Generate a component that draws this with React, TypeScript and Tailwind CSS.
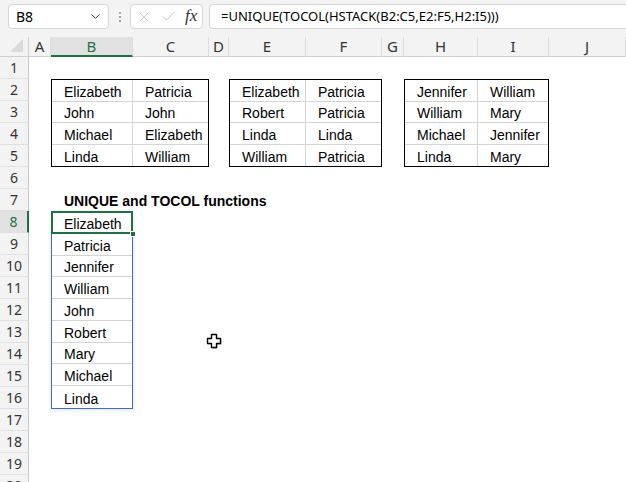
import { ChevronDown, X, Check } from 'lucide-react';

const cols = ['A', 'B', 'C', 'D', 'E', 'F', 'G', 'H', 'I', 'J'];

const Table = ({ rows, className }: { rows: string[][]; className: string }) => (
    <div className={`${className} row-start-3 row-span-4 border border-black grid grid-cols-subgrid grid-rows-4 bg-white z-10`}>
        {rows.map((r, i) =>
            r.map((name, j) => (
                <div
                    key={`${i}-${j}`}
                    className={`flex items-end leading-none pb-[2px] pl-[12px] ${i < 3 ? 'border-b border-[#d4d4d4]' : ''} ${j === 0 ? 'border-r border-[#d4d4d4]' : ''}`}
                >
                    {name}
                </div>
            ))
        )}
    </div>
);

const spill = ['Elizabeth', 'Patricia', 'Jennifer', 'William', 'John', 'Robert', 'Mary', 'Michael', 'Linda'];

const App = () => {
    return (
        <div className="w-[626px] h-[482px] overflow-hidden bg-white relative text-black" style={{ fontFamily: '"Liberation Sans", Arial, sans-serif' }}>
            {/* formula bar */}
            <div className="h-[37px] bg-[#f3f3f3] flex items-start pt-[4px] pl-[8px] gap-0" style={{ fontFamily: '"Noto Sans", sans-serif' }}>
                <div className="w-[101px] h-[25px] bg-white border border-[#d6d6d6] rounded-[4px] flex items-center pl-[7px] pr-[5px] text-[14px]">
                    <span className="flex-1">B8</span>
                    <ChevronDown size={15} strokeWidth={1.6} className="text-[#444]" />
                </div>
                <div className="w-[21px] h-[25px] flex flex-col items-center justify-center gap-[2px]">
                    <span className="w-[2px] h-[2px] bg-[#8a8a8a] rounded-full" />
                    <span className="w-[2px] h-[2px] bg-[#8a8a8a] rounded-full" />
                    <span className="w-[2px] h-[2px] bg-[#8a8a8a] rounded-full" />
                </div>
                <div className="w-[73px] h-[25px] bg-white border border-[#d6d6d6] rounded-[4px] flex items-center pl-[5px] gap-[8px]">
                    <X size={16} strokeWidth={1.1} className="text-[#b5b5b5]" />
                    <Check size={17} strokeWidth={1.1} className="text-[#b5b5b5]" />
                    <span className="text-[17px] italic text-[#333] leading-none -mt-[2px]" style={{ fontFamily: '"Liberation Serif", serif' }}>fx</span>
                </div>
                <div className="ml-[6px] flex-1 h-[25px] bg-white border border-[#d6d6d6] border-r-0 rounded-l-[4px] flex items-center pl-[11px] text-[13px]">
                    =UNIQUE(TOCOL(HSTACK(B2:C5,E2:F5,H2:I5)))
                </div>
            </div>

            {/* sheet */}
            <div className="grid grid-cols-[29px_22px_82px_76px_20px_77px_76px_22px_74px_71px_1fr] grid-rows-[20px_repeat(20,22px)] text-[14px]">
                {/* corner */}
                <div className="bg-[#f3f3f3] border-r border-b border-[#d0d0d0] flex items-end justify-end pr-[4px] pb-[3px]">
                    <svg width="14" height="14" viewBox="0 0 14 14">
                        <polygon points="13,0 13,13 0,13" fill="#dadada" />
                    </svg>
                </div>
                {cols.map((c) => (
                    <div
                        key={c}
                        className={`flex items-center justify-center text-[15px] border-r border-[#dcdcdc] ${
                            c === 'B'
                                ? 'bg-[#e1e1e1] text-[#1e7145] border-b-2 border-b-[#1e7145]'
                                : 'bg-[#f3f3f3] text-[#333] border-b border-b-[#d0d0d0]'
                        }`}
                        style={{ fontFamily: '"Noto Sans", sans-serif' }}
                    >
                        {c}
                    </div>
                ))}

                {/* row headers */}
                {Array.from({ length: 20 }, (_, i) => (
                    <div
                        key={i}
                        className={`col-start-1 flex items-center justify-center text-[14px] border-b border-[#e0e0e0] ${
                            i === 7
                                ? 'bg-[#e1e1e1] text-[#1e7145] border-r-2 border-r-[#1e7145]'
                                : 'bg-[#f3f3f3] text-[#333] border-r border-r-[#c8c8c8]'
                        }`}
                        style={{ gridRowStart: i + 2, fontFamily: '"Noto Sans", sans-serif' }}
                    >
                        {i + 1}
                    </div>
                ))}

                <Table
                    className="col-start-3 col-span-2"
                    rows={[
                        ['Elizabeth', 'Patricia'],
                        ['John', 'John'],
                        ['Michael', 'Elizabeth'],
                        ['Linda', 'William'],
                    ]}
                />
                <Table
                    className="col-start-6 col-span-2"
                    rows={[
                        ['Elizabeth', 'Patricia'],
                        ['Robert', 'Patricia'],
                        ['Linda', 'Linda'],
                        ['William', 'Patricia'],
                    ]}
                />
                <Table
                    className="col-start-9 col-span-2"
                    rows={[
                        ['Jennifer', 'William'],
                        ['William', 'Mary'],
                        ['Michael', 'Jennifer'],
                        ['Linda', 'Mary'],
                    ]}
                />

                <div className="col-start-3 col-span-5 row-start-8 flex items-end leading-none pb-[3px] pl-[13px] font-bold whitespace-nowrap">
                    UNIQUE and TOCOL functions
                </div>

                {/* spill range */}
                <div className="col-start-3 row-start-9 row-span-9 border border-[#3a6fc4] shadow-[0_1px_4px_rgba(0,0,0,0.12)] relative flex flex-col">
                    {spill.map((n, i) => (
                        <div key={n} className={`h-[22px] flex items-end leading-none pb-[2px] pl-[12px] ${i < 8 ? 'border-b border-[#d4d4d4]' : ''}`}>
                            {n}
                        </div>
                    ))}
                    <div className="absolute -left-[1px] -top-[1px] w-[82px] h-[23px] border-2 border-[#1e7145] pointer-events-none" />
                    <div className="absolute left-[78px] top-[19px] w-[6px] h-[6px] bg-[#1e7145] border border-white" />
                </div>
            </div>

            {/* cell cursor */}
            <svg className="absolute left-[205px] top-[332px]" width="18" height="18" viewBox="0 0 18 18">
                <path d="M6.5 2.5h5v4h4v5h-4v4h-5v-4h-4v-5h4z" fill="#000" transform="translate(1 1)" opacity="0.35" />
                <path d="M6.5 2.5h5v4h4v5h-4v4h-5v-4h-4v-5h4z" fill="#fff" stroke="#000" strokeWidth="1.4" strokeLinejoin="round" />
            </svg>
        </div>
    );
};

export default App;
